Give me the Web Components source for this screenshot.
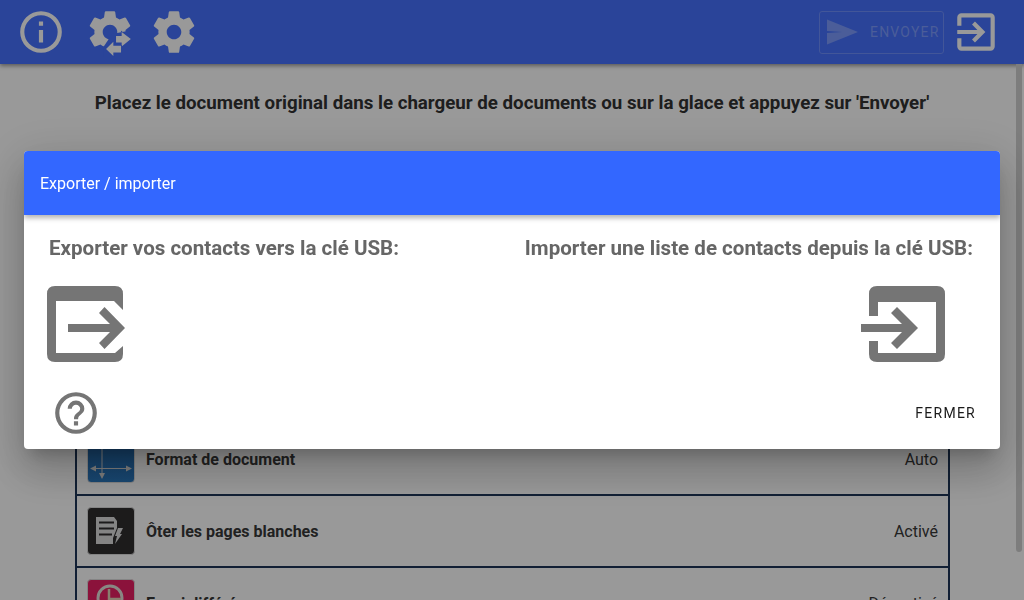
<!DOCTYPE html>
<html lang="fr">
<head>
<meta charset="utf-8">
<title>Exporter / importer</title>
<style>
  html, body { margin: 0; height: 100%; overflow: hidden; }
  body { font-family: Roboto, "Liberation Sans", sans-serif; background: #fff; }
</style>
</head>
<body>
<app-shell>
  <top-bar></top-bar>
  <p-instruction>Placez le document original dans le chargeur de documents ou sur la glace et appuyez sur 'Envoyer'</p-instruction>
  <setting-list>
    <setting-row label="Format de document" value="Auto" icon="format"></setting-row>
    <setting-row label="Ôter les pages blanches" value="Activé" icon="blank"></setting-row>
    <setting-row label="Envoi différé" value="Désactivé" icon="clock"></setting-row>
  </setting-list>
</app-shell>
<modal-overlay>
  <export-dialog></export-dialog>
</modal-overlay>

<script>
// shared icon shapes
const GEAR = "M19.43 12.98c.04-.32.07-.64.07-.98s-.03-.66-.07-.98l2.11-1.65c.19-.15.24-.42.12-.64l-2-3.46c-.12-.22-.39-.3-.61-.22l-2.49 1c-.52-.4-1.08-.73-1.69-.98l-.38-2.65C14.46 2.18 14.25 2 14 2h-4c-.25 0-.46.18-.49.42l-.38 2.65c-.61.25-1.17.59-1.69.98l-2.49-1c-.23-.09-.49 0-.61.22l-2 3.46c-.13.22-.07.49.12.64l2.11 1.65c-.04.32-.07.65-.07.98s.03.66.07.98l-2.11 1.65c-.19.15-.24.42-.12.64l2 3.46c.12.22.39.3.61.22l2.49-1c.52.4 1.08.73 1.69.98l.38 2.65c.03.24.24.42.49.42h4c.25 0 .46-.18.49-.42l.38-2.65c.61-.25 1.17-.59 1.69-.98l2.49 1c.23.09.49 0 .61-.22l2-3.46c.12-.22.07-.49-.12-.64l-2.11-1.65zM12 15.5c-1.93 0-3.5-1.57-3.5-3.5s1.57-3.5 3.5-3.5 3.5 1.57 3.5 3.5-1.57 3.5-3.5 3.5z";
const BAR_BG = "#4672ff";
const ICONS = {
  info: `<path d="M11 7h2v2h-2zm0 4h2v6h-2zm1-9a10 10 0 1 0 0 20 10 10 0 0 0 0-20zm0 18a8 8 0 1 1 0-16 8 8 0 0 1 0 16z"/>`,
  help: `<path d="M11 18h2v-2h-2v2zm1-16a10 10 0 1 0 0 20 10 10 0 0 0 0-20zm0 18a8 8 0 1 1 0-16 8 8 0 0 1 0 16zm0-14a4 4 0 0 0-4 4h2a2 2 0 1 1 4 0c0 2-3 1.75-3 5h2c0-2.25 3-2.5 3-5a4 4 0 0 0-4-4z"/>`,
  exit: `<path d="M10.09 15.59 11.5 17l5-5-5-5-1.41 1.41L12.67 11H3v2h9.67l-2.58 2.59zM19 3H5a2 2 0 0 0-2 2v4h2V5h14v14H5v-4H3v4a2 2 0 0 0 2 2h14a2 2 0 0 0 2-2V5a2 2 0 0 0-2-2z"/>`,
  exportBox: `<path d="M8 0H68Q76 0 76 8V24L67 15H9V67H68L76 60V68Q76 76 68 76H8Q0 76 0 68V8Q0 0 8 0z"/><path d="M21 38H63L52 27L57.500 21L78 42L57.500 63L52 57L63 46H21z"/>`,
  importBox: `<path d="M8 0H68Q76 0 76 8V68Q76 76 68 76H8Q0 76 0 68V55H9V67H67V16H9V30H0V8Q0 0 8 0z"/><path d="M-8 38H33L22 27L28 21L49 42L28 63L22 57L33 46H-8z"/>`
};

class TopBar extends HTMLElement {
  constructor() {
    super();
    this.attachShadow({ mode: "open" });
    this.shadowRoot.innerHTML = `
      <style>
        :host { display: flex; align-items: center; height: 64px; background: ${BAR_BG}; padding: 0 23px 0 16px; box-shadow: 0 2px 4px rgba(0,0,0,.4); position: relative; }
        svg { display: block; fill: #fff; flex: none; }
        .sync { margin-left: 19px; }
        .gear { margin-left: 14px; }
        .send { margin-left: auto; box-sizing: border-box; width: 125px; height: 43px; border: 1px solid #6e8fff; border-radius: 3px; display: flex; align-items: center; gap: 9px; padding-left: 5px; color: #7d9bff; font-size: 14px; letter-spacing: 1.2px; }
        .send svg { fill: #7d9bff; }
        .exit { margin-left: 7px; }
      </style>
      <svg width="50" height="50" viewBox="0 0 24 24">${ICONS.info}</svg>
      <svg class="sync" width="50" height="50" viewBox="0 0 24 24">
        <path d="${GEAR}"/>
        <path fill="${BAR_BG}" d="M13 13L24 10.800V24H9V19z"/>
        <path stroke="${BAR_BG}" stroke-width=".7" paint-order="stroke" d="M17.600 12L22 15.400L17.600 19V17H14.900V13.900H17.600z"/>
        <path stroke="${BAR_BG}" stroke-width=".7" paint-order="stroke" d="M10.100 20.200L13.600 16.700V18.600H17.300V21.800H13.600V23.500z"/>
      </svg>
      <svg class="gear" width="50" height="50" viewBox="0 0 24 24"><path d="${GEAR}"/></svg>
      <div class="send">
        <svg width="36" height="36" viewBox="0 0 36 36"><path d="M2 5.500L33 18L2 30.500V19L17 18L2 17z"/></svg>
        ENVOYER
      </div>
      <svg class="exit" width="50" height="50" viewBox="0 0 24 24">${ICONS.exit}</svg>`;
  }
}
customElements.define("top-bar", TopBar);

class PInstruction extends HTMLElement {
  constructor() {
    super();
    this.attachShadow({ mode: "open" });
    this.shadowRoot.innerHTML = `
      <style>
        :host { display: block; text-align: center; font-size: 18.72px; font-weight: 700; line-height: 24px; color: #323232; padding-top: 27px; }
      </style>
      <slot></slot>`;
  }
}
customElements.define("p-instruction", PInstruction);

class SettingList extends HTMLElement {
  constructor() {
    super();
    this.attachShadow({ mode: "open" });
    this.shadowRoot.innerHTML = `
      <style>
        :host { display: block; margin: 309px 0 0 75px; width: 875px; box-sizing: border-box; border: solid #1d3557; border-width: 0 2px; }
      </style>
      <slot></slot>`;
  }
}
customElements.define("setting-list", SettingList);

const ROW_ICONS = {
  format: { bg: "linear-gradient(#1f5f9c, #2a78bf)", svg: `<path fill="none" stroke="#d0d0d0" d="M14 0v41M3 32.500h40"/><path fill="#d0d0d0" d="M2 32.500l6-3v6zM44 32.500l-6-3v6zM14 43l-3-6h6z"/>` },
  blank: { bg: "#2f2d2e", svg: `<path fill="#dcdcdc" fill-rule="evenodd" d="M8 9H26L29 13V20L25 30V36H8zM11 13.500v2h15v-2zM11 19.500v2h15v-2zM11 25.500v2h13v-2z"/><path fill="#dcdcdc" d="M30 20h5l-3 6h2l-7 10 2-8h-2z"/>` },
  clock: { bg: "#e81e63", svg: `<circle cx="22" cy="18" r="12" fill="none" stroke="#e4e0da" stroke-width="3"/><path d="M21 9v10h12" fill="none" stroke="#e4d0b8" stroke-width="2.500"/>` }
};

class SettingRow extends HTMLElement {
  constructor() {
    super();
    this.attachShadow({ mode: "open" });
    const ic = ROW_ICONS[this.getAttribute("icon")];
    this.shadowRoot.innerHTML = `
      <style>
        :host { display: flex; align-items: center; height: 70px; border-bottom: 2px solid #1d3557; padding: 0 10px; font-size: 16px; color: #383838; background: #fff; }
        .ic { width: 46px; height: 46px; border: 1px solid #dcdcdc; border-radius: 4px; margin-right: 11px; flex: none; overflow: hidden; background: ${ic.bg}; }
        svg { display: block; }
        .label { font-weight: 700; flex: 1; }
      </style>
      <div class="ic"><svg width="46" height="46" viewBox="0 0 46 46">${ic.svg}</svg></div>
      <div class="label">${this.getAttribute("label")}</div>
      <div>${this.getAttribute("value")}</div>`;
  }
}
customElements.define("setting-row", SettingRow);

class AppShell extends HTMLElement {
  constructor() {
    super();
    this.attachShadow({ mode: "open" });
    this.shadowRoot.innerHTML = `
      <style>
        :host { display: block; height: 600px; overflow: hidden; position: relative; }
        .thumb { position: absolute; top: 64px; right: 2px; width: 6px; height: 488px; background: #d0d0d0; border-radius: 0 0 3px 3px; }
      </style>
      <slot></slot>
      <div class="thumb"></div>`;
  }
}
customElements.define("app-shell", AppShell);

class ModalOverlay extends HTMLElement {
  constructor() {
    super();
    this.attachShadow({ mode: "open" });
    this.shadowRoot.innerHTML = `
      <style>
        :host { position: fixed; inset: 0; display: flex; flex-direction: column; background: rgba(0,0,0,.4); padding: 151px 24px 0; box-sizing: border-box; }
      </style>
      <slot></slot>`;
  }
}
customElements.define("modal-overlay", ModalOverlay);

class ExportDialog extends HTMLElement {
  constructor() {
    super();
    this.attachShadow({ mode: "open" });
    this.shadowRoot.innerHTML = `
      <style>
        :host { display: block; height: 298px; background: #fff; border-radius: 4px; overflow: hidden; box-shadow: 0 11px 15px -7px rgba(0,0,0,.2), 0 24px 38px 3px rgba(0,0,0,.14), 0 9px 46px 8px rgba(0,0,0,.12); }
        header { height: 64px; background: #3367ff; color: #fff; font-size: 16px; display: flex; align-items: center; padding-left: 16px; box-shadow: 0 3px 5px rgba(0,0,0,.3); position: relative; }
        .cols { display: flex; justify-content: space-between; padding: 21px 27px 0 25px; }
        .col { display: flex; flex-direction: column; }
        .col.right { align-items: flex-end; }
        h2 { margin: 0; font-size: 18px; font-size: 20.56px; line-height: 24px; font-weight: 700; color: #666; white-space: nowrap; }
        svg { display: block; fill: #757575; overflow: visible; }
        .big { margin-top: 26px; }
        .left .big { margin-left: -2px; }
        .right .big { margin-right: 28px; }
        footer { display: flex; justify-content: space-between; align-items: center; padding: 0 24px 0 27px; margin-top: 26px; }
        button { border: 0; background: none; font: inherit; font-size: 14px; letter-spacing: 1.25px; color: #1a1a1a; padding: 0; }
      </style>
      <header>Exporter / importer</header>
      <div class="cols">
        <div class="col left">
          <h2>Exporter vos contacts vers la clé USB:</h2>
          <svg class="big" width="78" height="76" viewBox="0 0 78 76">${ICONS.exportBox}</svg>
        </div>
        <div class="col right">
          <h2>Importer une liste de contacts depuis la clé USB:</h2>
          <svg class="big" width="84" height="76" viewBox="-8 0 84 76">${ICONS.importBox}</svg>
        </div>
      </div>
      <footer>
        <svg width="50" height="50" viewBox="0 0 24 24">${ICONS.help}</svg>
        <button>FERMER</button>
      </footer>`;
  }
}
customElements.define("export-dialog", ExportDialog);
</script>
</body>
</html>
